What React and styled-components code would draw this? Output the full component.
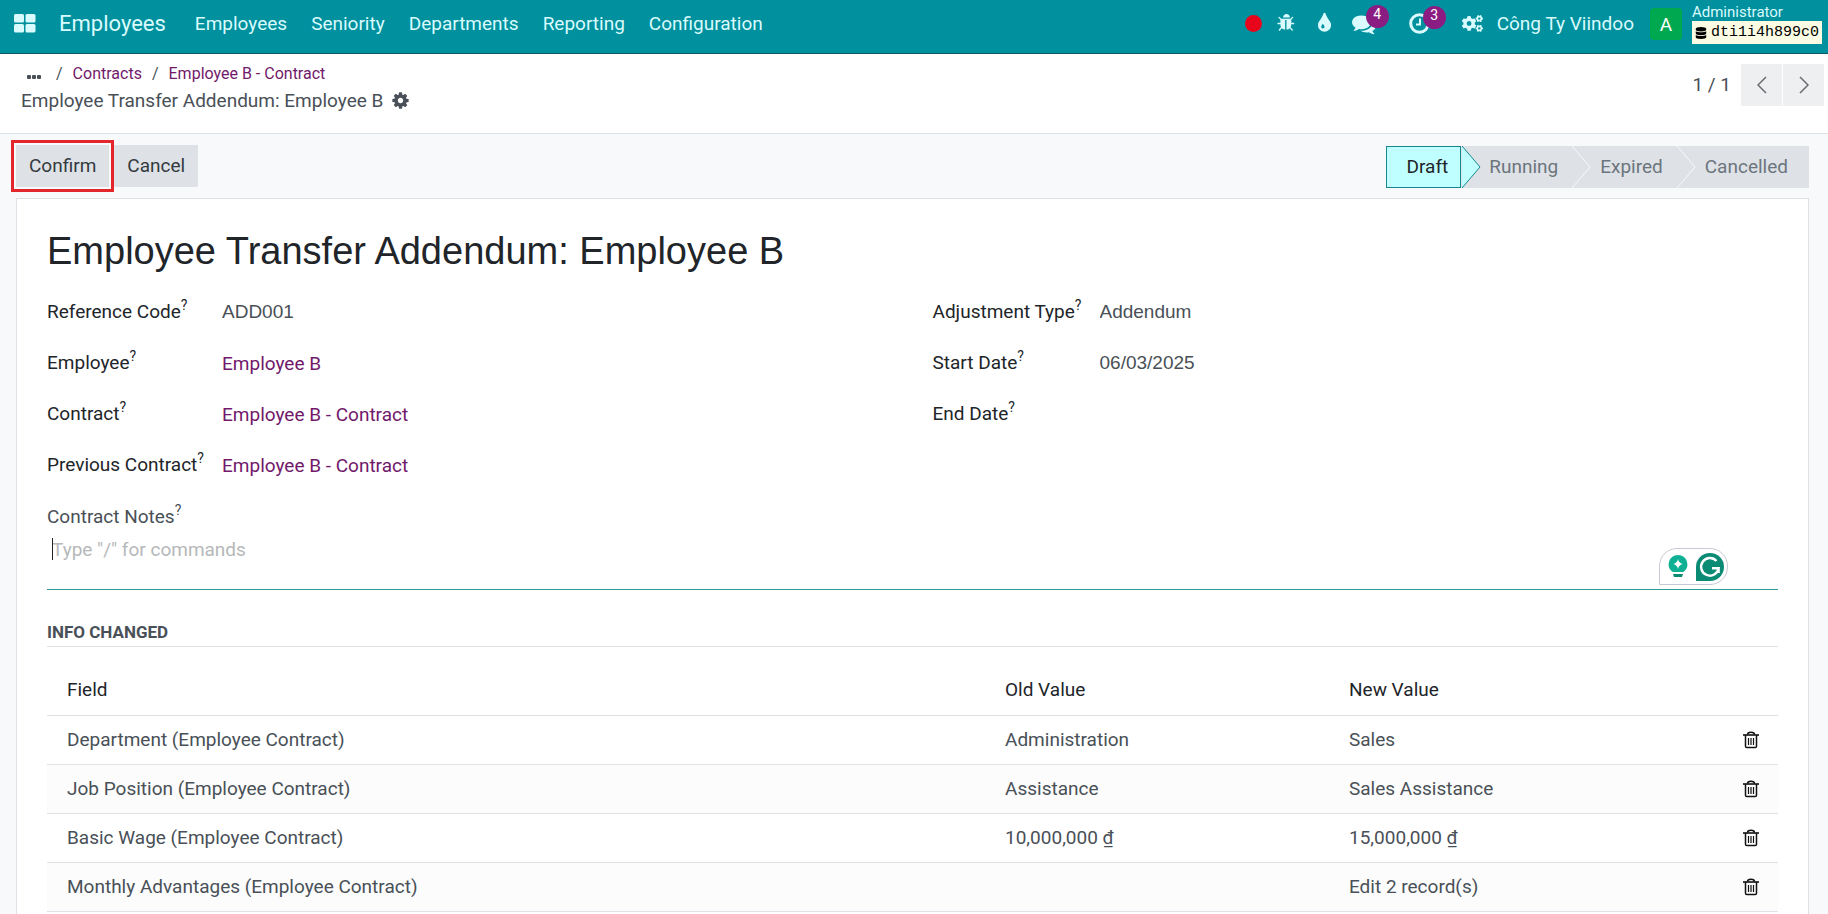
import React from "react";
import styled, { createGlobalStyle } from "styled-components";
import { FaCogs, FaDatabase } from "react-icons/fa";

const Global = createGlobalStyle`
  * { box-sizing: border-box; }
  body { margin: 0; background: #f8f9fa; color: #495057; font: 19px/27px Roboto, "Liberation Sans", sans-serif; }
  button, input, textarea { font: inherit; color: inherit; }
  a { text-decoration: none; color: inherit; }
`;

const Shell = styled.div`
  display: flex;
  flex-direction: column;
  height: 100vh;
`;
const Scroller = styled.div`
  flex: 1;
  min-height: 0;
  overflow-y: auto;
  scrollbar-width: none;
`;

const Navbar = styled.header`
  display: flex;
  flex: none;
  align-items: center;
  height: 54px;
  padding: 0 6px 6px 14px;
  background: #00909e;
  border-bottom: 1px solid #0b5a66;
  color: #d9fbfd;
  white-space: nowrap;
`;
const Brand = styled.a`
  margin: 0 29px 0 23px;
  font-size: 22px;
`;
const Menu = styled.nav`
  display: flex;
  gap: 24px;
`;
const Tray = styled.div`
  display: flex;
  align-items: center;
  margin-left: auto;
`;
const TrayButton = styled.button`
  position: relative;
  display: flex;
  padding: 0;
  margin-right: ${(p) => p.$gap}px;
  border: 0;
  background: none;
  color: #d9fbfd;
`;
const Badge = styled.span`
  position: absolute;
  top: -7px;
  left: 14px;
  width: 23px;
  height: 23px;
  border-radius: 12px;
  background: #8b1d82;
  color: #fff;
  font-size: 14px;
  line-height: 19px;
  text-align: center;
`;
const RecordDot = styled.span`
  width: 17px;
  height: 17px;
  border-radius: 50%;
  background: #e8041b;
`;
const Avatar = styled.span`
  width: 32px;
  height: 32px;
  margin: 0 10px 0 16px;
  border-radius: 4px;
  background: #00a84f;
  color: #fff;
  line-height: 33px;
  text-align: center;
`;
const User = styled.div`
  display: flex;
  flex-direction: column;
  font-size: 15px;
  line-height: 18px;
`;
const DbName = styled.span`
  display: flex;
  align-items: center;
  gap: 4px;
  height: 23px;
  padding: 0 3px;
  background: #fcfbe3;
  color: #000;
  font: 15px/23px "Liberation Mono", monospace;
`;

const ControlPanel = styled.div`
  display: flex;
  flex: none;
  justify-content: space-between;
  height: 80px;
  padding: 6px 4px 0 21px;
  background: #fff;
  border-bottom: 1px solid #dee2e6;
`;
const Crumbs = styled.nav`
  display: flex;
  gap: 10px;
  padding-left: 5px;
  font-size: 16px;
  a { color: #71196a; }
`;
const CrumbMore = styled.button`
  width: 16px;
  padding: 0;
  margin-right: 4px;
  border: 0;
  background: none;
`;
const Current = styled.div`
  display: flex;
  align-items: center;
  gap: 8px;
`;
const Pager = styled.div`
  display: flex;
  gap: 1px;
  height: 42px;
  margin-top: 4px;
  line-height: 42px;
  span { margin-right: 9px; }
`;
const PagerButton = styled.button`
  display: grid;
  place-items: center;
  width: 41px;
  border: 0;
  background: #eeeff1;
`;

const StatusRow = styled.div`
  display: flex;
  flex: none;
  justify-content: space-between;
  height: 64px;
  padding: 6px 19px 0 11px;
`;
const Actions = styled.div`
  display: flex;
`;
const Highlight = styled.div`
  height: 52px;
  padding: 2px;
  border: 3px solid #e3262b;
`;
const ActionButton = styled.button`
  height: 42px;
  margin-top: ${(p) => p.$top || 0}px;
  padding: 0 13px 1px;
  border: 0;
  background: #dee2e6;
  color: #343a40;
`;
const Steps = styled.div`
  display: flex;
  height: 42px;
  margin-top: 6px;
`;
const Step = styled.button`
  position: relative;
  padding: 0 ${(p) => (p.$last ? 21 : p.$on ? 12 : 14)}px 1px ${(p) => (p.$on ? 20 : 28)}px;
  border: ${(p) => (p.$on ? "1px solid #17878f" : "0")};
  background: ${(p) => (p.$on ? "#c0ffff" : "#dee2e6")};
  color: ${(p) => (p.$on ? "#212529" : "#6c757d")};
`;
const StepArrow = styled.svg`
  position: absolute;
  z-index: 1;
  top: ${(p) => (p.$on ? -1 : 0)}px;
  left: ${(p) => (p.$on ? "calc(100% + 2px)" : "100%")};
`;

const Sheet = styled.main`
  margin: 0 19px 0 16px;
  padding: 28px 30px 60px;
  background: #fff;
  border: 1px solid #dee2e6;
`;
const Title = styled.h1`
  margin: 0 0 23px;
  color: #212529;
  font: 400 38px/48px "Liberation Sans", Arial, sans-serif;
`;
const Columns = styled.div`
  display: grid;
  grid-template-columns: 1fr 1fr;
  gap: 40px;
  align-items: start;
`;
const Fields = styled.div`
  display: grid;
  grid-template-columns: ${(p) => p.$label}px 1fr;
  grid-auto-rows: 27px;
  row-gap: 24px;
  label { color: #212529; white-space: nowrap; }
  input {
    min-width: 0;
    padding: 0;
    border: 0;
    outline: 0;
    background: none;
    font-family: "Liberation Sans", Arial, sans-serif;
  }
`;
const RecordLink = styled.a`
  padding-top: 1px;
  && { color: #71196a; }
`;
const Help = styled.sup`
  font-size: 14px;
  line-height: 0;
  vertical-align: 8px;
`;
const NotesLabel = styled.label`
  display: block;
  margin-top: 25px;
`;
const Notes = styled.div`
  position: relative;
  height: 60px;
  border-bottom: 1px solid #2f9c9c;
  textarea {
    display: block;
    width: 100%;
    height: 54px;
    padding: 6px 5px;
    border: 0;
    outline: 0;
    resize: none;
    background: none;
  }
  textarea::placeholder { color: #b6b8ba; opacity: 1; }
`;
const Caret = styled.span`
  position: absolute;
  left: 5px;
  top: 8px;
  width: 1px;
  height: 22px;
  background: #212529;
`;
const Assistant = styled.div`
  position: absolute;
  right: 50px;
  bottom: 4px;
  display: flex;
  align-items: center;
  gap: 8px;
  width: 69px;
  height: 37px;
  padding-left: 8px;
  border: 1px solid #c9c9d3;
  border-radius: 18px 18px 18px 0;
  background: #fff;
`;
const Section = styled.h2`
  margin: 29px 0 18px;
  border-bottom: 1px solid #dee2e6;
  font-size: 17px;
  font-weight: 700;
  line-height: 27px;
`;
const Table = styled.table`
  width: 100%;
  border-collapse: collapse;
  table-layout: fixed;
  th, td { padding: 0 20px; text-align: left; border-bottom: 1px solid #dee2e6; }
  th { height: 50px; color: #212529; font-weight: 400; }
  td { height: 49px; }
  tbody tr:nth-child(even) { background: #fcfcfc; }
  td:last-child { padding: 0 19px 0 0; }
`;
const Col = styled.col`
  width: ${(p) => p.$w};
`;
const DeleteButton = styled.button`
  display: flex;
  margin-left: auto;
  padding: 0;
  border: 0;
  background: none;
  color: #111;
`;

const q = <Help>?</Help>;
const rows = [
  ["Department (Employee Contract)", "Administration", "Sales"],
  ["Job Position (Employee Contract)", "Assistance", "Sales Assistance"],
  ["Basic Wage (Employee Contract)", "10,000,000 ₫", "15,000,000 ₫"],
  ["Monthly Advantages (Employee Contract)", "", "Edit 2 record(s)"],
];

const glyphs = {
  bug: "M1632 896q0 26-19 45t-45 19h-224q0 171-67 290l208 209q19 19 19 45t-19 45q-18 19-45 19t-45-19l-198-197q-5 5-15 13t-42 28.5-65 36.5-82 29-97 13v-896h-128v896q-51 0-101.5-13.5t-87-33-66-39-43.5-32.5l-15-14-183 207q-20 21-48 21-24 0-43-17-19-18-20.5-44.5t15.500-46.500l202-227q-58-114-58-274h-224q-26 0-45-19t-19-45 19-45 45-19h224v-294l-173-173q-19-19-19-45t19-45 45-19 45 19l173 173h844l173-173q19-19 45-19t45 19 19 45-19 45l-173 173v294h224q26 0 45 19t19 45zm-416-576h-640q0-133 93.500-226.500t226.500-93.500 226.500 93.500 93.500 226.500z",
  tint: "M896 1152q0-36-20-69-1-1-15.500-22.500t-25.500-38-25-44-21-50.500q-4-16-21-16t-21 16q-7 23-21 50.500t-25 44-25.500 38-15.500 22.500q-20 33-20 69 0 53 37.500 90.500t90.500 37.500 90.500-37.500 37.500-90.500zm512-128q0 212-150 362t-362 150-362-150-150-362q0-145 81-275 6-9 62.500-90.500t101-151 99.500-178 83-201.500q9-30 34-47t51-17 51.500 17 33.500 47q28 93 83 201.500t99.500 178 101 151 62.500 90.500q81 127 81 275z",
  comments: "M1408 768q0 139-94 257t-256.500 186.500-353.500 68.500q-86 0-176-16-124 88-278 128-36 9-86 16h-3q-11 0-20.500-8t-11.500-21q-1-3-1-6.500t.5-6.500 2-6l2.500-5 3.500-5.500 4-5 4.500-5 4-4.500q5-6 23-25t26-29.500 22.500-29 25-38.500 20.500-44q-124-72-195-177t-71-224q0-139 94-257t256.500-186.500 353.500-68.500 353.500 68.500 256.500 186.500 94 257zm384 256q0 120-71 224.500t-195 176.500q10 24 20.500 44t25 38.500 22.500 29 26 29.500 23 25q1 1 4 4.500t4.500 5 4 5 3.500 5.500l2.500 5 2 6 .5 6.500-1 6.500q-3 14-13 22t-22 7q-50-7-86-16-154-40-278-128-90 16-176 16-271 0-472-132 58 4 88 4 161 0 309-45t264-129q125-92 192-212t67-254q0-77-23-152 129 71 204 178t75 230z",
  cog: "M1152 896q0-106-75-181t-181-75-181 75-75 181 75 181 181 75 181-75 75-181zm512-109v222q0 12-8 23t-20 13l-185 28q-19 54-39 91 35 50 107 138 10 12 10 25t-9 23q-27 37-99 108t-94 71q-12 0-26-9l-138-108q-44 23-91 38-16 136-29 186-7 28-36 28h-222q-14 0-24.500-8.500t-11.500-21.500l-28-184q-49-16-90-37l-141 107q-10 9-25 9-14 0-25-11-126-114-165-168-7-10-7-23 0-12 8-23 15-21 51-66.500t54-70.500q-27-50-41-99l-183-27q-13-2-21-12.500t-8-23.500v-222q0-12 8-23t19-13l186-28q14-46 39-92-40-57-107-138-10-12-10-24 0-10 9-23 26-36 98.500-107.500t94.500-71.500q13 0 26 10l138 107q44-23 91-38 16-136 29-186 7-28 36-28h222q14 0 24.500 8.500t11.500 21.500l28 184q49 16 90 37l142-107q9-9 24-9 13 0 25 10 129 119 165 170 7 8 7 22 0 12-8 23-15 21-51 66.500t-54 70.500q26 50 41 98l183 28q13 2 21 12.500t8 23.500z",
};
const Glyph = ({ name, size }) => (
  <svg width={size} height={size} viewBox="0 0 1792 1792" fill="currentColor"><path d={glyphs[name]} /></svg>
);

const Arrow = ({ on }) => (
  <StepArrow $on={on} width="19" height="42" viewBox="0 0 19 42">
    <path d="M0 0L18 21L0 42Z" fill={on ? "#c0ffff" : "#dee2e6"} />
    <path d="M0 0L18 21L0 42" fill="none" stroke={on ? "#17878f" : "#f8f9fa"} />
  </StepArrow>
);

const Trash = () => (
  <svg width="16" height="18" viewBox="0 0 16 18" fill="none" stroke="currentColor">
    <path d="M0 4H16" strokeWidth="1.6" />
    <path d="M4.5 3.5C4.5 .5 11.5 .5 11.5 3.5M2.5 4V15.2Q2.5 16.5 3.8 16.5H12.2Q13.5 16.5 13.5 15.2V4" strokeWidth="1.5" />
    <path d="M5.5 7V14M8 7V14M10.5 7V14" strokeWidth="1.2" />
  </svg>
);

export default function App() {
  return (
    <Shell>
      <Global />
      <Navbar>
        <TrayButton $gap={0} aria-label="Apps">
          <svg width="22" height="19" viewBox="0 0 22 19" fill="currentColor">
            <rect width="10" height="8.5" rx="1.5" /><rect x="11.5" width="10" height="8.5" rx="1.5" />
            <rect y="10" width="10" height="8.5" rx="1.5" /><rect x="11.5" y="10" width="10" height="8.5" rx="1.5" />
          </svg>
        </TrayButton>
        <Brand href="#">Employees</Brand>
        <Menu>
          {["Employees", "Seniority", "Departments", "Reporting", "Configuration"].map((m) => <a href="#" key={m}>{m}</a>)}
        </Menu>
        <Tray>
          <TrayButton $gap={15} aria-label="Record"><RecordDot /></TrayButton>
          <TrayButton $gap={17} aria-label="Debug"><Glyph name="bug" size={19} /></TrayButton>
          <TrayButton $gap={16} aria-label="Theme"><Glyph name="tint" size={23} /></TrayButton>
          <TrayButton $gap={33} aria-label="Messages"><Glyph name="comments" size={24} /><Badge>4</Badge></TrayButton>
          <TrayButton $gap={32} aria-label="Activities">
            <svg width="21" height="21" viewBox="0 0 21 21" fill="none" stroke="currentColor">
              <circle cx="10.5" cy="10.5" r="8.8" strokeWidth="3" /><path d="M11 5.5V11.5H7" strokeWidth="2" />
            </svg>
            <Badge>3</Badge>
          </TrayButton>
          <TrayButton $gap={14} aria-label="Settings"><FaCogs size={21} /></TrayButton>
          <a href="#">Công Ty Viindoo</a>
          <Avatar>A</Avatar>
          <User>
            <span>Administrator</span>
            <DbName><FaDatabase size={12} />dti1i4h899c0</DbName>
          </User>
        </Tray>
      </Navbar>

      <ControlPanel>
        <div>
          <Crumbs>
            <CrumbMore aria-label="More">
              <svg width="14" height="4" viewBox="0 0 14 4" fill="#495057"><rect width="4" height="4" rx="1" /><rect x="5" width="4" height="4" rx="1" /><rect x="10" width="4" height="4" rx="1" /></svg>
            </CrumbMore>
            <span>/</span><a href="#">Contracts</a><span>/</span><a href="#">Employee B - Contract</a>
          </Crumbs>
          <Current>Employee Transfer Addendum: Employee B <Glyph name="cog" size={19} /></Current>
        </div>
        <Pager>
          <span>1 / 1</span>
          <PagerButton aria-label="Previous"><svg width="10" height="18" viewBox="0 0 10 18" fill="none" stroke="#666b70" strokeWidth="1.5"><path d="M9 1L1 9L9 17" /></svg></PagerButton>
          <PagerButton aria-label="Next"><svg width="10" height="18" viewBox="0 0 10 18" fill="none" stroke="#666b70" strokeWidth="1.5"><path d="M1 1L9 9L1 17" /></svg></PagerButton>
        </Pager>
      </ControlPanel>

      <StatusRow>
        <Actions>
          <Highlight><ActionButton>Confirm</ActionButton></Highlight>
          <ActionButton $top={5}>Cancel</ActionButton>
        </Actions>
        <Steps>
          <Step $on>Draft<Arrow on /></Step>
          <Step>Running<Arrow /></Step>
          <Step>Expired<Arrow /></Step>
          <Step $last>Cancelled</Step>
        </Steps>
      </StatusRow>

      <Scroller>
        <Sheet>
          <Title>Employee Transfer Addendum: Employee B</Title>
          <Columns>
            <Fields $label={175}>
              <label htmlFor="ref">Reference Code{q}</label><input id="ref" defaultValue="ADD001" />
              <label htmlFor="employee">Employee{q}</label><RecordLink id="employee" href="#">Employee B</RecordLink>
              <label htmlFor="contract">Contract{q}</label><RecordLink id="contract" href="#">Employee B - Contract</RecordLink>
              <label htmlFor="previous">Previous Contract{q}</label><RecordLink id="previous" href="#">Employee B - Contract</RecordLink>
            </Fields>
            <Fields $label={167}>
              <label htmlFor="type">Adjustment Type{q}</label><input id="type" defaultValue="Addendum" />
              <label htmlFor="start">Start Date{q}</label><input id="start" defaultValue="06/03/2025" />
              <label htmlFor="end">End Date{q}</label><input id="end" />
            </Fields>
          </Columns>
          <NotesLabel htmlFor="notes">Contract Notes{q}</NotesLabel>
          <Notes>
            <textarea id="notes" placeholder={'Type "/" for commands'} />
            <Caret />
            <Assistant>
              <svg width="20" height="23" viewBox="0 0 20 23">
                <path d="M10 0A9.3 9.3 0 0 1 15.2 17H4.8A9.3 9.3 0 0 1 10 0Z" fill="#0fb094" />
                <path d="M10 4Q10.8 8.2 15 9Q10.8 9.8 10 14Q9.2 9.8 5 9Q9.2 8.2 10 4Z" fill="#fff" />
                <path d="M5 19H15L14 22H6Z" fill="#0b8a74" />
              </svg>
              <svg width="28" height="28" viewBox="0 0 28 28">
                <path d="M14 0A14 14 0 1 1 14 28H0V14A14 14 0 0 1 14 0Z" fill="#0b8a74" />
                <path d="M20.5 8A8.8 8.8 0 1 0 22.6 15.2H16M22.6 15.2V20" fill="none" stroke="#fff" strokeWidth="2.4" />
              </svg>
            </Assistant>
          </Notes>
          <Section>INFO CHANGED</Section>
          <Table>
            <colgroup><col /><Col $w="344px" /><Col $w="344px" /><Col $w="105px" /></colgroup>
            <thead><tr><th>Field</th><th>Old Value</th><th>New Value</th><th aria-label="Actions" /></tr></thead>
            <tbody>
              {rows.map((r) => (
                <tr key={r[0]}>
                  {r.map((c, i) => <td key={i}>{c}</td>)}
                  <td><DeleteButton aria-label="Delete"><Trash /></DeleteButton></td>
                </tr>
              ))}
            </tbody>
          </Table>
        </Sheet>
      </Scroller>
    </Shell>
  );
}
